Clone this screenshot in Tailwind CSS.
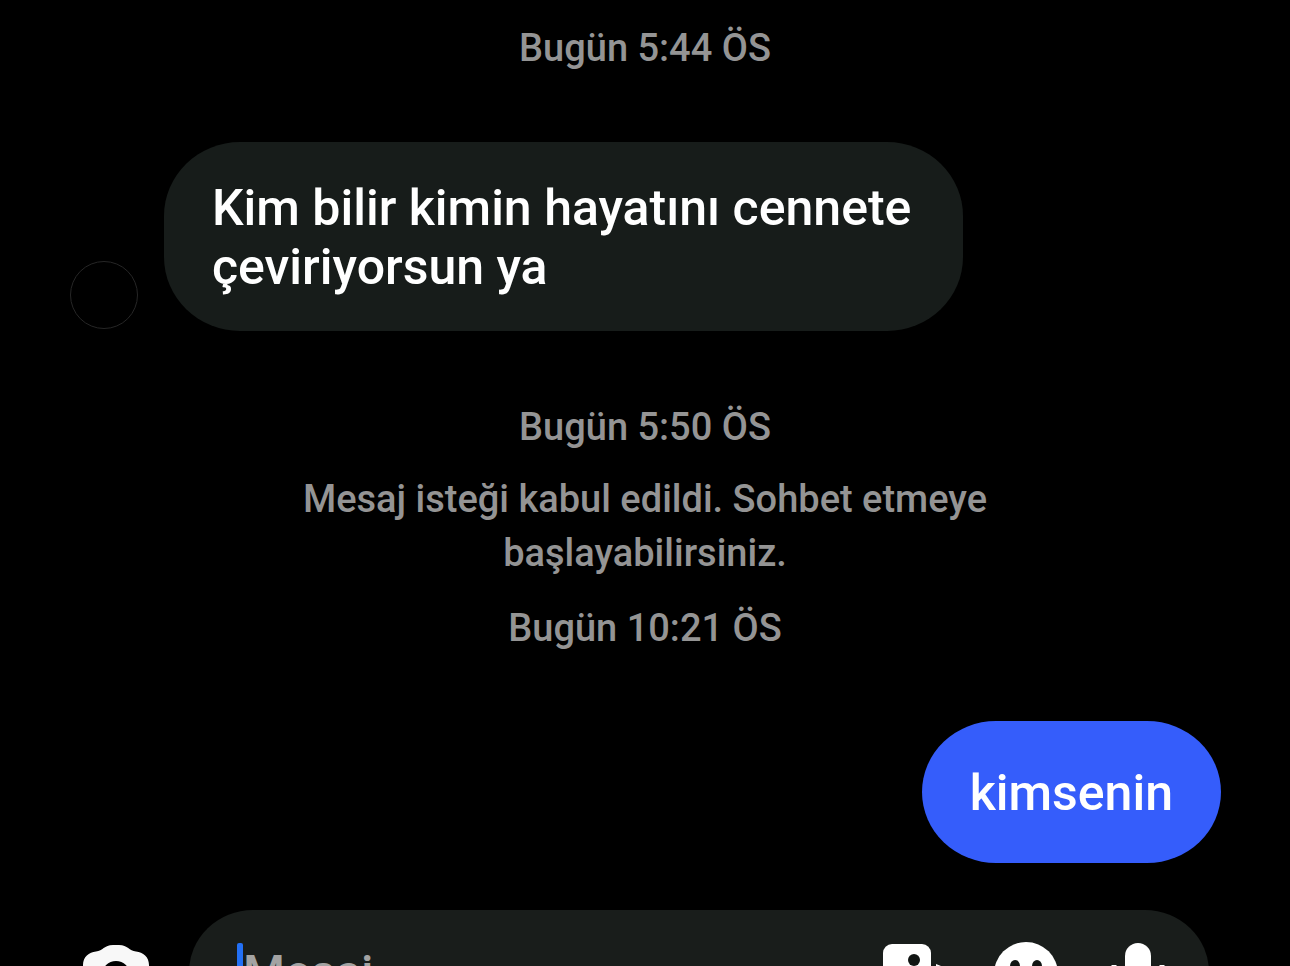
<!DOCTYPE html>
<html lang="tr">
<head>
<meta charset="utf-8">
<meta name="viewport" content="width=device-width, initial-scale=1">
<title>Sohbet</title>
<script src="https://cdn.jsdelivr.net/npm/@tailwindcss/browser@4"></script>
</head>
<body class="bg-black">
<main class="flex h-screen flex-col overflow-hidden bg-black font-['Roboto',sans-serif] font-medium text-white">
  <section class="flex shrink-0 flex-col" aria-label="Mesajlar">
    <time class="mt-[21px] text-center text-[38px] leading-[54px] text-[#949494]">Bugün 5:44 ÖS</time>

    <div class="mt-[67px] flex items-end gap-[26px] pl-[70px]">
      <div class="mb-[2px] size-[68px] shrink-0 rounded-full border border-[#262626]"></div>
      <p class="rounded-[76px/74px] bg-[#171c1a] pr-[52px] pl-12 pt-[37px] pb-[34px] text-[50px] leading-[59px]">Kim bilir kimin hayatını cennete<br>çeviriyorsun ya</p>
    </div>

    <time class="mt-[69px] text-center text-[38px] leading-[54px] text-[#949494]">Bugün 5:50 ÖS</time>
    <p class="mx-auto mt-[18px] max-w-[760px] text-center text-[38px] leading-[54px] text-[#949494]">Mesaj isteği kabul edildi. Sohbet etmeye başlayabilirsiniz.</p>
    <time class="mt-[21px] text-center text-[38px] leading-[54px] text-[#949494]">Bugün 10:21 ÖS</time>

    <p class="mt-[66px] mr-[69px] self-end rounded-[74px/71px] bg-[#355dfb] px-12 pt-[43px] pb-[40px] text-[50px] leading-[59px]">kimsenin</p>
  </section>

  <form class="mt-[47px] flex shrink-0 items-center pr-[81px] pl-[82px]">
    <button type="button" aria-label="Kamera" class="shrink-0">
      <svg class="h-[56px] w-[68px]" viewBox="0 0 68 56" fill="none">
        <path fill="#f8f8f8" d="M1 21C1 13 7 8 14 7.500C21 7 22 1 31 1H37C46 1 47 7 54 7.500C61 8 67 13 67 21V42Q67 55 54 55H14Q1 55 1 42Z"/>
        <circle cx="34" cy="31" r="11" stroke="#000" stroke-width="6"/>
      </svg>
    </button>
    <div class="ml-[39px] flex h-[124px] grow items-center rounded-[64px/62px] bg-[#191d1b] pr-[42px] pl-12">
      <span class="h-[58px] w-[6px] shrink-0 rounded-xs bg-[#2370f5]"></span>
      <input type="text" aria-label="Mesaj" placeholder="Mesaj" class="min-w-0 grow bg-transparent text-[48px] leading-[59px] outline-none placeholder:text-[#a3a3a3]">
      <div class="flex shrink-0 items-center gap-[46px]">
        <button type="button" aria-label="Fotoğraf">
          <svg class="h-[60px] w-[66px]" viewBox="0 0 66 60">
            <rect x="1" y="2" width="48" height="56" rx="9" fill="#fff"/>
            <circle cx="32" cy="18" r="6" fill="#111513"/>
            <path d="M6 46l13-15 11 12 7-7 9 10v5H6Z" fill="#111513"/>
            <path d="M54 22l5 2q5 2 4 7l-4 16q-1 4-5 4Z" fill="#fff"/>
          </svg>
        </button>
        <button type="button" aria-label="Çıkartma">
          <svg class="h-[68px] w-[64px]" viewBox="0 0 64 68">
            <circle cx="32" cy="36" r="32" fill="#fff"/>
            <ellipse cx="21" cy="28" rx="5" ry="6" fill="#111513"/>
            <ellipse cx="43" cy="28" rx="5" ry="6" fill="#111513"/>
            <path d="M16 43H48Q44 57 32 57T16 43Z" fill="#111513"/>
          </svg>
        </button>
        <button type="button" aria-label="Sesli mesaj">
          <svg class="h-[60px] w-[63px]" viewBox="0 0 63 60" fill="none">
            <rect x="21" y="1" width="26" height="40" rx="13" fill="#fff"/>
            <path d="M10 23v5c0 28 48 28 48 0v-5M34 49v10" stroke="#fff" stroke-width="5"/>
          </svg>
        </button>
      </div>
    </div>
  </form>
</main>
</body>
</html>
